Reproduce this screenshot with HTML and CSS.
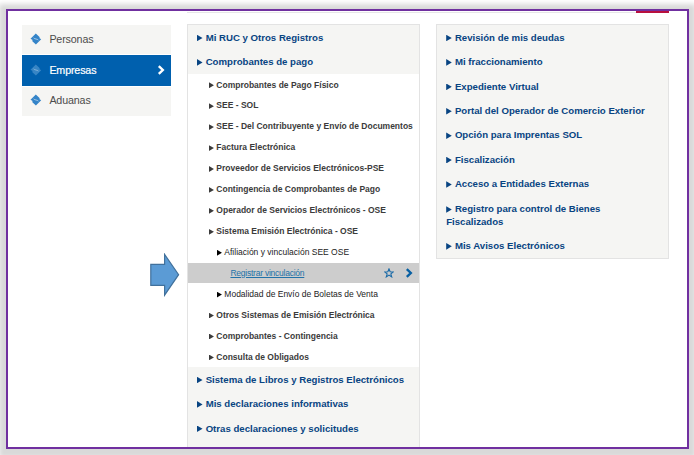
FILE: index.html
```
<!DOCTYPE html>
<html lang="es">
<head>
<meta charset="utf-8">
<title>Menú SOL</title>
<link rel="stylesheet" href="styles.css">
</head>
<body>
<svg class="defs" width="0" height="0" aria-hidden="true">
  <symbol id="logo" viewBox="0 0 12 12">
    <path d="M5.8 .4 9.8 4.2 9.3 5 11.2 6.2 5.9 11.5 2.1 7.9 2.7 7 .5 5.7Z" fill="currentColor"/>
    <path d="M3.6 4.9C4.8 6.3 7.2 5.7 8.4 7.1" fill="none" stroke="#fff" stroke-opacity=".6" stroke-width=".9"/>
  </symbol>
  <symbol id="chevron" viewBox="0 0 8 10"><path d="M1.8 1.2 5.8 5 1.8 8.8" fill="none" stroke="currentColor" stroke-width="2.4"/></symbol>
</svg>
<main class="frame">
  <div class="topline"><span class="tab"></span></div>
  <div class="columns">
    <nav class="side">
      <a class="side-item"><svg class="logo"><use href="#logo"/></svg><span>Personas</span></a>
      <a class="side-item active"><svg class="logo"><use href="#logo"/></svg><span>Empresas</span><svg class="chevron"><use href="#chevron"/></svg></a>
      <a class="side-item"><svg class="logo"><use href="#logo"/></svg><span>Aduanas</span></a>
    </nav>
    <section class="panel middle">
      <div class="head"><i class="tri"></i><span>Mi RUC y Otros Registros</span></div>
      <div class="head"><i class="tri"></i><span>Comprobantes de pago</span></div>
      <div class="submenu">
        <div class="sub"><i class="tri"></i><span>Comprobantes de Pago Físico</span></div>
        <div class="sub"><i class="tri"></i><span>SEE - SOL</span></div>
        <div class="sub"><i class="tri"></i><span>SEE - Del Contribuyente y Envío de Documentos</span></div>
        <div class="sub"><i class="tri"></i><span>Factura Electrónica</span></div>
        <div class="sub"><i class="tri"></i><span>Proveedor de Servicios Electrónicos-PSE</span></div>
        <div class="sub"><i class="tri"></i><span>Contingencia de Comprobantes de Pago</span></div>
        <div class="sub"><i class="tri"></i><span>Operador de Servicios Electrónicos - OSE</span></div>
        <div class="sub"><i class="tri"></i><span>Sistema Emisión Electrónica - OSE</span></div>
        <div class="sub leaf"><i class="tri"></i><span>Afiliación y vinculación SEE OSE</span></div>
        <div class="sub selected">
          <a>Registrar vinculación</a>
          <svg class="star" viewBox="0 0 10 10"><path d="M5 .9 6.15 3.75 9.3 3.9 6.85 5.85 7.7 8.9 5 7.15 2.3 8.9 3.15 5.85.7 3.9 3.85 3.75Z"/></svg>
          <svg class="chevron"><use href="#chevron"/></svg>
        </div>
        <div class="sub leaf"><i class="tri"></i><span>Modalidad de Envío de Boletas de Venta</span></div>
        <div class="sub"><i class="tri"></i><span>Otros Sistemas de Emisión Electrónica</span></div>
        <div class="sub"><i class="tri"></i><span>Comprobantes - Contingencia</span></div>
        <div class="sub"><i class="tri"></i><span>Consulta de Obligados</span></div>
      </div>
      <div class="head"><i class="tri"></i><span>Sistema de Libros y Registros Electrónicos</span></div>
      <div class="head"><i class="tri"></i><span>Mis declaraciones informativas</span></div>
      <div class="head"><i class="tri"></i><span>Otras declaraciones y solicitudes</span></div>
    </section>
    <section class="panel right">
      <div class="head"><i class="tri"></i><span>Revisión de mis deudas</span></div>
      <div class="head"><i class="tri"></i><span>Mi fraccionamiento</span></div>
      <div class="head"><i class="tri"></i><span>Expediente Virtual</span></div>
      <div class="head"><i class="tri"></i><span>Portal del Operador de Comercio Exterior</span></div>
      <div class="head"><i class="tri"></i><span>Opción para Imprentas SOL</span></div>
      <div class="head"><i class="tri"></i><span>Fiscalización</span></div>
      <div class="head"><i class="tri"></i><span>Acceso a Entidades Externas</span></div>
      <div class="head wrap"><i class="tri"></i><span>Registro para control de Bienes</span><br>Fiscalizados</div>
      <div class="head"><i class="tri"></i><span>Mis Avisos Electrónicos</span></div>
    </section>
  </div>
  <svg class="pointer" viewBox="0 0 30 44"><path d="M.8 11.3H14.6V1.4L28.6 21.7 14.6 42.2V32.3H.8Z"/></svg>
</main>
</body>
</html>
```

FILE: styles.css
```
* { box-sizing: border-box; }
body {
  margin: 0;
  height: 455px;
  overflow: hidden;
  background: #fff;
  font-family: "Liberation Sans", Arial, sans-serif;
  padding: 9px 5px 6px 6px;
}
.defs { position: absolute; }
.frame {
  position: relative;
  height: 440px;
  border: 2px solid #7030a0;
  background: #fff;
  box-shadow: 0 2px 5px 7px #d9d9d9;
}
.columns {
  display: grid;
  grid-template-columns: 149px 233px 233px;
  column-gap: 16.25px;
  align-items: start;
  height: 423px;
  margin-left: 13.7px;
  overflow: hidden;
}
.topline {
  display: flex;
  justify-content: flex-end;
  height: 2px;
  margin: 0 18px 11px 179px;
  border-bottom: 1px solid #e6e6e6;
}
.tab { width: 33px; height: 2px; background: #b80f3f; }
.side { display: grid; grid-template-rows: 29px 30.5px 29.5px; row-gap: 1px; margin-top: 1px; }
.side-item {
  display: flex;
  align-items: center;
  padding: 0 5.5px 1px 8px;
  background: #f5f5f3;
  color: #4c4c4c;
  font-size: 10.7px;
  letter-spacing: -.14px;
}
.side-item:last-child { padding-bottom: 2.4px; }
.side-item span { flex: 1; margin-left: 7.7px; }
.logo { width: 12px; height: 12px; color: #3484c8; }
.side-item.active { padding-bottom: 1.5px; background: #0060ae; color: #fff; }
.active span { -webkit-text-stroke: .2px #fff; }
.active .logo { color: #4a92cd; opacity: .75; }
.chevron { width: 8px; height: 10px; }
.panel { border: 1px solid #e3e3e3; background: #f5f5f3; }
.middle { height: 440px; }
.head {
  height: 24.43px;
  padding: .7px 0 0 9px;
  line-height: 24.43px;
  color: #084482;
  font-size: 9.64px;
  font-weight: bold;
  white-space: nowrap;
}
.tri {
  display: inline-block;
  width: 5.6px;
  height: 6.6px;
  margin-right: 3.1px;
  vertical-align: -.6px;
  background: currentColor;
  clip-path: polygon(0 0, 100% 50%, 0 100%);
}
.head.wrap { height: 37.4px; line-height: 13px; padding-top: 6.2px; }
.submenu { background: #fff; }
.sub {
  height: 20.95px;
  padding: .7px 0 0 21px;
  line-height: 20.95px;
  color: #3b3b3b;
  font-size: 8.5px;
  font-weight: bold;
  white-space: nowrap;
}
.sub .tri { width: 5px; height: 5.8px; margin-right: 2.4px; }
.leaf { padding-left: 29px; font-weight: normal; color: #222; }
.leaf .tri { background: #000; }
.selected {
  display: flex;
  align-items: center;
  height: 20px;
  margin: .95px 0 0;
  padding: 0 6px 0 42.5px;
  background: #cdcdcd;
  font-weight: normal;
}
.selected a { flex: 1; color: #2272a8; letter-spacing: -.24px; text-decoration: underline; }
.selected .chevron { color: #0860a3; }
.star { width: 10px; height: 10px; margin-right: 11px; fill: none; stroke: #1768a6; stroke-width: 1.1; }
/* Callout arrow laid over the menu edge */
.pointer { position: absolute; left: 142px; top: 242px; width: 30px; height: 44px; fill: #5b9bd5; stroke: #41719c; stroke-width: 1.2; }
```
